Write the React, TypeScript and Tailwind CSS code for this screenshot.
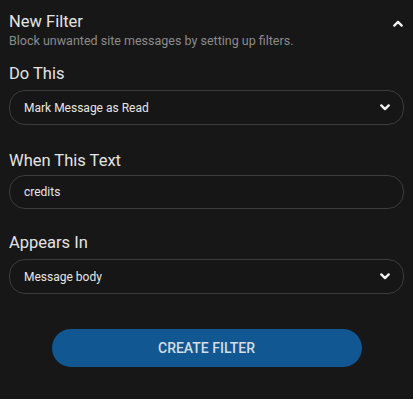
import { useState } from 'react';

function Chevron({ up = false }: { up?: boolean }) {
    return (
        <svg width="10" height="7" viewBox="0 0 10 7" className="shrink-0">
            <path
                d={up ? 'M1.3 5.6 L5 1.9 L8.7 5.6' : 'M1.3 1.4 L5 5.1 L8.7 1.4'}
                fill="none"
                stroke="#f2f2f2"
                strokeWidth="2.3"
                strokeLinecap="round"
                strokeLinejoin="round"
            />
        </svg>
    );
}

function SelectBox({ value }: { value: string }) {
    return (
        <div className="mt-[4px] h-[35px] rounded-[16px] border border-[#3c3c3c] bg-[#161616] pl-[14px] pr-[13px] flex items-center justify-between">
            <span className="text-[12px] text-[#e6e6e6]">{value}</span>
            <Chevron />
        </div>
    );
}

export default function App() {
    const [text, setText] = useState('credits');

    return (
        <div className="min-h-[399px] w-full bg-[#171717] font-['Roboto',sans-serif] text-[#e4e4e4]">
            <div className="px-[9px] pt-[11px] pb-[32px]">
                <div className="flex items-start justify-between">
                    <div>
                        <h2 className="text-[16.5px] leading-[22px] text-[#e4e4e4]">New Filter</h2>
                        <p className="text-[12.5px] leading-[16px] text-[#8c8c8c]">Block unwanted site messages by setting up filters.</p>
                    </div>
                    <div className="pt-[9px] pr-[1px]">
                        <Chevron up />
                    </div>
                </div>

                <label className="block mt-[13px] text-[16.5px] leading-[24px]">Do This</label>
                <SelectBox value="Mark Message as Read" />

                <label className="block mt-[24px] text-[16.5px] leading-[24px]">When This Text</label>
                <input
                    value={text}
                    onChange={(e) => setText(e.target.value)}
                    className="mt-[2px] w-full h-[34px] rounded-[16px] border border-[#3c3c3c] bg-[#161616] px-[14px] text-[12px] text-[#e6e6e6] outline-none"
                />

                <label className="block mt-[22px] text-[16.5px] leading-[24px]">Appears In</label>
                <SelectBox value="Message body" />

                <div className="mt-[35px] flex justify-center">
                    <button className="w-[310px] h-[38px] rounded-full bg-[#115892] text-[14px] font-medium text-[#d6dde5]">
                        CREATE FILTER
                    </button>
                </div>
            </div>
        </div>
    );
}
